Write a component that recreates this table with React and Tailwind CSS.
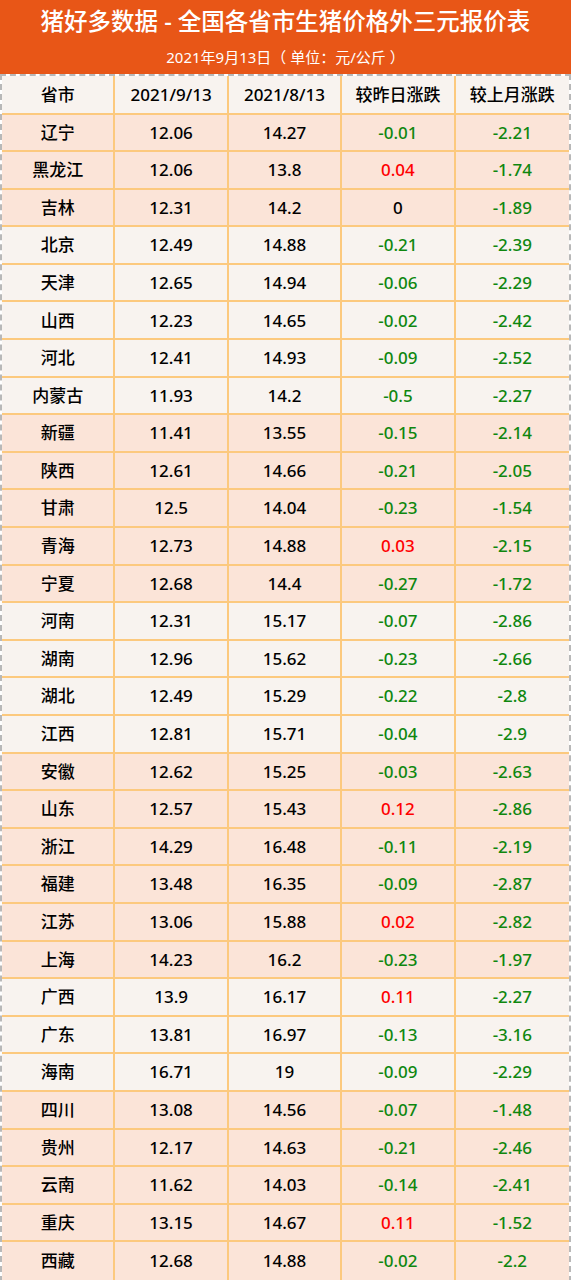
import React from "react";

const rows = [
  ["辽宁", "12.06", "14.27", "-0.01", "-2.21", 1],
  ["黑龙江", "12.06", "13.8", "0.04", "-1.74", 1],
  ["吉林", "12.31", "14.2", "0", "-1.89", 1],
  ["北京", "12.49", "14.88", "-0.21", "-2.39", 0],
  ["天津", "12.65", "14.94", "-0.06", "-2.29", 0],
  ["山西", "12.23", "14.65", "-0.02", "-2.42", 0],
  ["河北", "12.41", "14.93", "-0.09", "-2.52", 0],
  ["内蒙古", "11.93", "14.2", "-0.5", "-2.27", 0],
  ["新疆", "11.41", "13.55", "-0.15", "-2.14", 1],
  ["陕西", "12.61", "14.66", "-0.21", "-2.05", 1],
  ["甘肃", "12.5", "14.04", "-0.23", "-1.54", 1],
  ["青海", "12.73", "14.88", "0.03", "-2.15", 1],
  ["宁夏", "12.68", "14.4", "-0.27", "-1.72", 1],
  ["河南", "12.31", "15.17", "-0.07", "-2.86", 0],
  ["湖南", "12.96", "15.62", "-0.23", "-2.66", 0],
  ["湖北", "12.49", "15.29", "-0.22", "-2.8", 0],
  ["江西", "12.81", "15.71", "-0.04", "-2.9", 0],
  ["安徽", "12.62", "15.25", "-0.03", "-2.63", 1],
  ["山东", "12.57", "15.43", "0.12", "-2.86", 1],
  ["浙江", "14.29", "16.48", "-0.11", "-2.19", 1],
  ["福建", "13.48", "16.35", "-0.09", "-2.87", 1],
  ["江苏", "13.06", "15.88", "0.02", "-2.82", 1],
  ["上海", "14.23", "16.2", "-0.23", "-1.97", 1],
  ["广西", "13.9", "16.17", "0.11", "-2.27", 0],
  ["广东", "13.81", "16.97", "-0.13", "-3.16", 0],
  ["海南", "16.71", "19", "-0.09", "-2.29", 0],
  ["四川", "13.08", "14.56", "-0.07", "-1.48", 1],
  ["贵州", "12.17", "14.63", "-0.21", "-2.46", 1],
  ["云南", "11.62", "14.03", "-0.14", "-2.41", 1],
  ["重庆", "13.15", "14.67", "0.11", "-1.52", 1],
  ["西藏", "12.68", "14.88", "-0.02", "-2.2", 1],
];

function colorFor(v) {
  if (v.startsWith("-")) return "text-[#0f870f]";
  if (v === "0") return "text-black";
  return "text-[#ff0000]";
}

const font = { fontFamily: '"Noto Sans", "Noto Sans CJK SC", sans-serif' };

function Cell({ children, last, className = "" }) {
  return (
    <div
      className={
        "flex items-center justify-center " +
        (last ? "" : "border-r-2 border-[#fcc97e] ") +
        className
      }
    >
      {children}
    </div>
  );
}

export default function App() {
  return (
    <div className="w-[571px] bg-white font-medium" style={font}>
      <div className="h-[74px] bg-[#e85617] flex flex-col items-center text-white">
        <div className="text-[23.5px] leading-none mt-[10px]">
          猪好多数据 - 全国各省市生猪价格外三元报价表
        </div>
        <div className="text-[15px] leading-none mt-[16px] font-normal">
          2021年9月13日（ 单位：元/公斤 ）
        </div>
      </div>
      <div className="border-2 border-dashed border-[#b8b8b8] text-[17px] text-black">
        <div className="grid grid-cols-5 h-[38.5px] bg-[#f8f3ef] border-b-2 border-[#fcc97e]">
          <Cell>省市</Cell>
          <Cell>2021/9/13</Cell>
          <Cell>2021/8/13</Cell>
          <Cell>较昨日涨跌</Cell>
          <Cell last>较上月涨跌</Cell>
        </div>
        {rows.map((r, i) => (
          <div
            key={r[0]}
            className={
              "grid grid-cols-5 h-[37.6px] " +
              (r[5] ? "bg-[#fbe4d8] " : "bg-[#f8f3ef] ") +
              (i === rows.length - 1 ? "" : "border-b-2 border-[#fcc97e]")
            }
          >
            <Cell>{r[0]}</Cell>
            <Cell>{r[1]}</Cell>
            <Cell>{r[2]}</Cell>
            <Cell className={colorFor(r[3])}>{r[3]}</Cell>
            <Cell last className={colorFor(r[4])}>{r[4]}</Cell>
          </div>
        ))}
      </div>
    </div>
  );
}
